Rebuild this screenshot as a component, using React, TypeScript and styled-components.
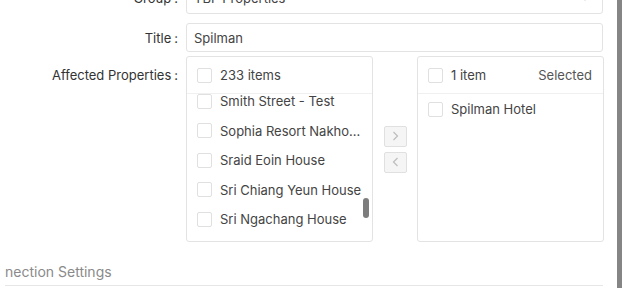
import React from "react";
import styled, { createGlobalStyle } from "styled-components";

const Global = createGlobalStyle`
  html, body { margin: 0; padding: 0; background: #fff; }
  body { font-family: Inter, "Noto Sans", sans-serif; }
`;

const Page = styled.div`
  box-sizing: content-box;
  width: 617px;
  height: 288px;
  border-right: 5px solid #858585;
  overflow: hidden;
`;

const Main = styled.div`
  box-sizing: border-box;
  width: 617px;
  padding-right: 14px;
  display: flex;
  flex-direction: column;
`;

const Row = styled.div<{ $mt?: number }>`
  display: flex;
  flex-shrink: 0;
  align-items: flex-start;
  margin-top: ${(p) => p.$mt ?? 0}px;
`;

const Label = styled.label<{ $h: number }>`
  box-sizing: border-box;
  flex: 0 0 186px;
  height: ${(p) => p.$h}px;
  display: flex;
  align-items: center;
  justify-content: flex-end;
  padding-right: 8px;
  font-size: 13px;
  color: #333;
  white-space: nowrap;
`;

const Colon = styled.span`
  margin-left: 3px;
`;

const Field = styled.div<{ $h: number }>`
  box-sizing: border-box;
  flex: 1;
  min-width: 0;
  height: ${(p) => p.$h}px;
  border: 1px solid #e3e3e3;
  border-radius: 3px;
  display: flex;
  align-items: center;
  padding: 0 12px 0 7px;
  font-size: 13px;
  color: #444;
`;

const FieldText = styled.span`
  flex: 1;
`;

const Transfer = styled.div`
  display: flex;
  align-items: center;
`;

const ListBox = styled.div<{ $w: number }>`
  box-sizing: border-box;
  width: ${(p) => p.$w}px;
  height: 186px;
  border: 1px solid #e3e3e3;
  border-radius: 3px;
  display: flex;
  flex-direction: column;
  overflow: hidden;
`;

const ListHeader = styled.div`
  box-sizing: border-box;
  height: 37px;
  flex: 0 0 37px;
  border-bottom: 1px solid #f0f0f0;
  display: flex;
  align-items: center;
  padding: 0 11px 0 10px;
  font-size: 13px;
  color: #444;
`;

const HeaderCount = styled.span`
  flex: 1;
`;

const HeaderTitle = styled.span`
  color: #555;
`;

const Check = styled.span`
  box-sizing: border-box;
  flex: 0 0 15px;
  width: 15px;
  height: 15px;
  border: 1px solid #e0e0e0;
  border-radius: 2px;
  background: #fff;
  margin-right: 8px;
`;

const ListBody = styled.div`
  position: relative;
  flex: 1;
  overflow: hidden;
`;

const ItemList = styled.ul<{ $offset: number }>`
  list-style: none;
  margin: ${(p) => -p.$offset}px 0 0;
  padding: 0;
`;

const Item = styled.li<{ $h: number }>`
  box-sizing: border-box;
  height: ${(p) => p.$h}px;
  display: flex;
  align-items: center;
  padding-left: 10px;
  font-size: 13px;
  color: #444;
  white-space: nowrap;
`;

const Thumb = styled.div`
  position: absolute;
  right: 3px;
  top: 104px;
  width: 6px;
  height: 20px;
  border-radius: 3px;
  background: #7d7d7d;
`;

const Ops = styled.div`
  width: 44px;
  display: flex;
  flex-direction: column;
  align-items: center;
  gap: 5px;
`;

const OpButton = styled.button`
  box-sizing: border-box;
  width: 23px;
  height: 21px;
  padding: 0;
  border: 1px solid #e0e0e0;
  border-radius: 2px;
  background: #f5f5f5;
  display: flex;
  align-items: center;
  justify-content: center;
`;

const Section = styled.div`
  flex-shrink: 0;
  margin-top: 21px;
  margin-left: 5px;
  padding-bottom: 5px;
  border-bottom: 1px solid #e6e6e6;
  font-size: 14px;
  color: #8a8a8a;
`;

const Chevron = () => (
  <svg width="10" height="6" viewBox="0 0 10 6" fill="none">
    <path d="M1 1l4 4 4-4" stroke="#c4c4c4" strokeWidth="1.2" />
  </svg>
);

const Arrow = ({ dir }: { dir: "right" | "left" }) => (
  <svg width="7" height="10" viewBox="0 0 7 10" fill="none">
    <path
      d={dir === "right" ? "M1.5 1l4 4-4 4" : "M5.5 1l-4 4 4 4"}
      stroke="#bdbdbd"
      strokeWidth="1.2"
    />
  </svg>
);

const leftItems = [
  "Smith Street - Test",
  "Sophia Resort Nakho...",
  "Sraid Eoin House",
  "Sri Chiang Yeun House",
  "Sri Ngachang House",
  "Sri Panwa House",
];

export default function App() {
  return (
    <>
      <Global />
      <Page>
        <Main>
          <Row $mt={-18}>
            <Label $h={32}>
              Group<Colon>:</Colon>
            </Label>
            <Field $h={32}>
              <FieldText>TBF Properties</FieldText>
              <Chevron />
            </Field>
          </Row>
          <Row $mt={9}>
            <Label $h={29}>
              Title<Colon>:</Colon>
            </Label>
            <Field $h={29}>
              <FieldText>Spilman</FieldText>
            </Field>
          </Row>
          <Row $mt={4}>
            <Label $h={37}>
              Affected Properties<Colon>:</Colon>
            </Label>
            <Transfer>
              <ListBox $w={187}>
                <ListHeader>
                  <Check />
                  <HeaderCount>233 items</HeaderCount>
                </ListHeader>
                <ListBody>
                  <ItemList $offset={7.5}>
                    {leftItems.map((t) => (
                      <Item key={t} $h={29.5}>
                        <Check />
                        {t}
                      </Item>
                    ))}
                  </ItemList>
                  <Thumb />
                </ListBody>
              </ListBox>
              <Ops>
                <OpButton>
                  <Arrow dir="right" />
                </OpButton>
                <OpButton>
                  <Arrow dir="left" />
                </OpButton>
              </Ops>
              <ListBox $w={187}>
                <ListHeader>
                  <Check />
                  <HeaderCount>1 item</HeaderCount>
                  <HeaderTitle>Selected</HeaderTitle>
                </ListHeader>
                <ListBody>
                  <ItemList $offset={0}>
                    <Item $h={30}>
                      <Check />
                      Spilman Hotel
                    </Item>
                  </ItemList>
                </ListBody>
              </ListBox>
            </Transfer>
          </Row>
          <Section>nection Settings</Section>
        </Main>
      </Page>
    </>
  );
}
